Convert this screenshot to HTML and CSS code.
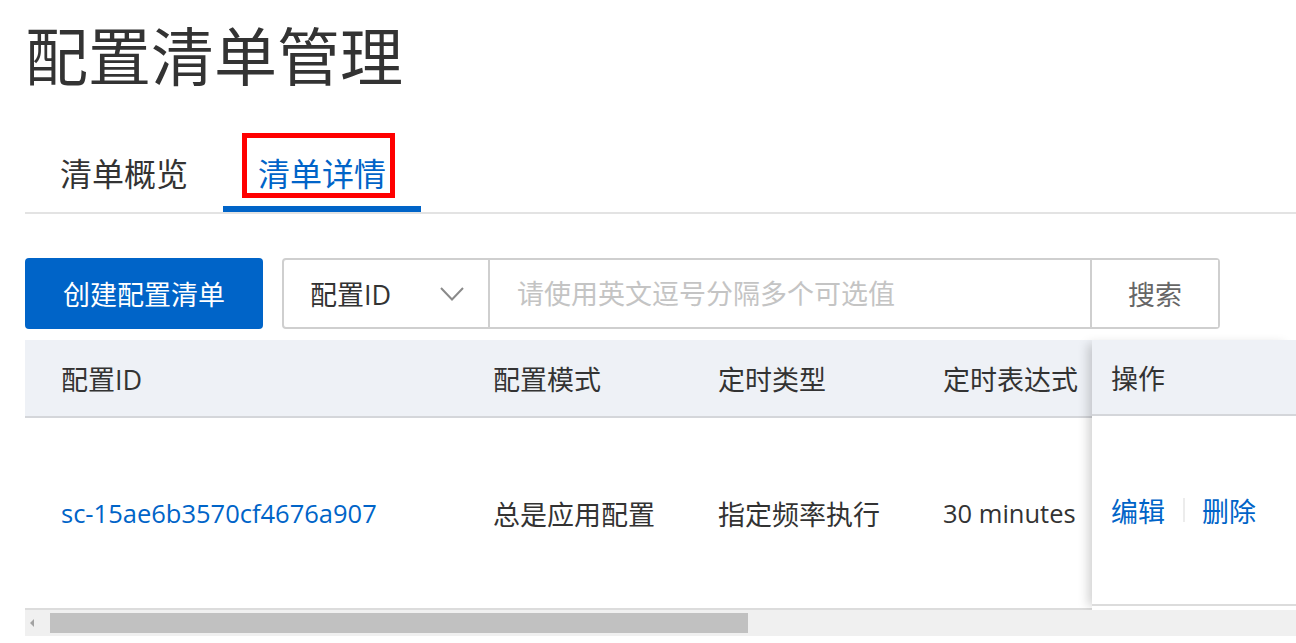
FILE: index.html
```html
<!DOCTYPE html>
<html lang="zh-CN">
  <head>
    <meta charset="UTF-8" />
    <meta name="viewport" content="width=device-width, initial-scale=1.0" />
    <title>配置清单管理</title>
    <link rel="stylesheet" href="styles.css">
  </head>
  <body>
    <div class="page">
      <h1 class="title">配置清单管理</h1>

      <div class="tabs">
        <div class="tab">清单概览</div>
        <div class="tab active">清单详情<span class="mark"></span></div>
      </div>

      <div class="toolbar">
        <button class="btn-create">创建配置清单</button>
        <div class="search">
          <div class="select">
            <span>配置ID</span>
            <svg width="24" height="14" viewBox="0 0 24 14">
              <path d="M1 1 L12 12.5 L23 1" fill="none" stroke="#8a8a8a" stroke-width="2" />
            </svg>
          </div>
          <input class="query" type="text" placeholder="请使用英文逗号分隔多个可选值" />
          <button class="btn-search">搜索</button>
        </div>
      </div>

      <div class="table">
        <div class="table-main">
          <div class="row head">
            <div class="cell c1">配置ID</div>
            <div class="cell c2">配置模式</div>
            <div class="cell c3">定时类型</div>
            <div class="cell c4">定时表达式</div>
          </div>
          <div class="row body">
            <div class="cell c1"><a class="link latin" href="#">sc-15ae6b3570cf4676a907</a></div>
            <div class="cell c2">总是应用配置</div>
            <div class="cell c3">指定频率执行</div>
            <div class="cell c4"><span class="latin">30 minutes</span></div>
          </div>
        </div>
        <div class="table-fixed">
          <div class="cell head">操作</div>
          <div class="cell body">
            <a class="link" href="#">编辑</a><span class="sep"></span><a class="link" href="#">删除</a>
          </div>
        </div>
      </div>

      <div class="hscroll">
        <span class="arrow"></span>
        <span class="thumb"></span>
      </div>
    </div>
  </body>
</html>
```

FILE: styles.css
```css
body {
  margin: 0;
  background: #fff;
  color: #333;
  font-family: "Open Sans", "Noto Sans CJK SC", sans-serif;
  overflow: hidden;
}
.page {
  padding-left: 25px;
}
.title {
  margin: 12px 0 0;
  font-size: 63px;
  font-weight: 400;
  line-height: 88px;
  color: #333;
}

/* Tabs */
.tabs {
  display: flex;
  margin-top: 38px;
  border-bottom: 2px solid #e3e3e3;
}
.tab {
  position: relative;
  padding: 16px 35px 12px;
  font-size: 32px;
  line-height: 40px;
  border-bottom: 6px solid transparent;
  color: #333;
}
.tab.active {
  color: #0064c8;
  border-bottom-color: #0064c8;
}
.mark {
  position: absolute;
  left: 19px;
  top: -5px;
  width: 153px;
  height: 65px;
  box-sizing: border-box;
  border: 5px solid #ff0000;
}

/* Toolbar */
.toolbar {
  display: flex;
  margin-top: 44px;
  height: 71px;
}
button {
  font-family: "Open Sans", "Noto Sans CJK SC", sans-serif;
  cursor: pointer;
}
.btn-create {
  width: 238px;
  border: 0;
  border-radius: 4px;
  background: #0064c8;
  color: #fff;
  font-size: 27px;
}
.search {
  display: flex;
  width: 938px;
  margin-left: 19px;
  box-sizing: border-box;
  border: 2px solid #cfcfcf;
  border-radius: 4px;
}
.select {
  display: flex;
  align-items: center;
  justify-content: space-between;
  width: 206px;
  box-sizing: border-box;
  padding: 0 24px 0 26px;
  border-right: 2px solid #cfcfcf;
  font-size: 27px;
  color: #333;
}
.query {
  flex: 1;
  min-width: 0;
  margin: 0;
  padding: 0 0 0 27px;
  border: 0;
  outline: none;
  font-family: "Open Sans", "Noto Sans CJK SC", sans-serif;
  font-size: 27px;
  color: #333;
}
.query::placeholder {
  color: #c4c4c4;
}
.btn-search {
  width: 128px;
  border: 0;
  border-left: 2px solid #cfcfcf;
  background: #fff;
  color: #666;
  font-size: 27px;
}

/* Table */
.table {
  display: flex;
  margin-top: 11px;
  font-size: 27px;
}
.table-main {
  flex: 1;
  min-width: 0;
  overflow: hidden;
}
.row {
  display: flex;
  width: 1150px;
}
.cell {
  flex: none;
  display: flex;
  align-items: center;
  box-sizing: border-box;
  padding-left: 18px;
  white-space: nowrap;
}
.head {
  height: 76px;
  background: #eef1f6;
  border-bottom: 2px solid #d4d6da;
}
.body {
  height: 190px;
  background: #fff;
  border-bottom: 2px solid #dcdcdc;
}
.row .cell {
  height: 100%;
}
.c1 {
  width: 450px;
  padding-left: 36px;
}
.c2,
.c3 {
  width: 225px;
}
.c4 {
  width: 250px;
}
.latin {
  font-size: 25.5px;
}
.link {
  color: #0064c8;
  text-decoration: none;
}
.table-fixed {
  position: relative;
  width: 204px;
  flex: none;
  box-shadow: -8px 0 10px -4px rgba(0, 0, 0, 0.18);
}
.table-fixed .cell {
  padding-left: 19px;
}
.sep {
  display: inline-block;
  width: 2px;
  height: 24px;
  margin: 0 17px 0 18px;
  background: #ececec;
}

/* Scrollbar */
.hscroll {
  position: relative;
  height: 26px;
  background: #f0f0f0;
}
.arrow {
  position: absolute;
  left: 5px;
  top: 9px;
  border-style: solid;
  border-width: 4px 4px 4px 0;
  border-color: transparent #a3a3a3 transparent transparent;
}
.thumb {
  position: absolute;
  left: 25px;
  top: 3px;
  width: 698px;
  height: 20px;
  background: #c1c1c1;
}
```
